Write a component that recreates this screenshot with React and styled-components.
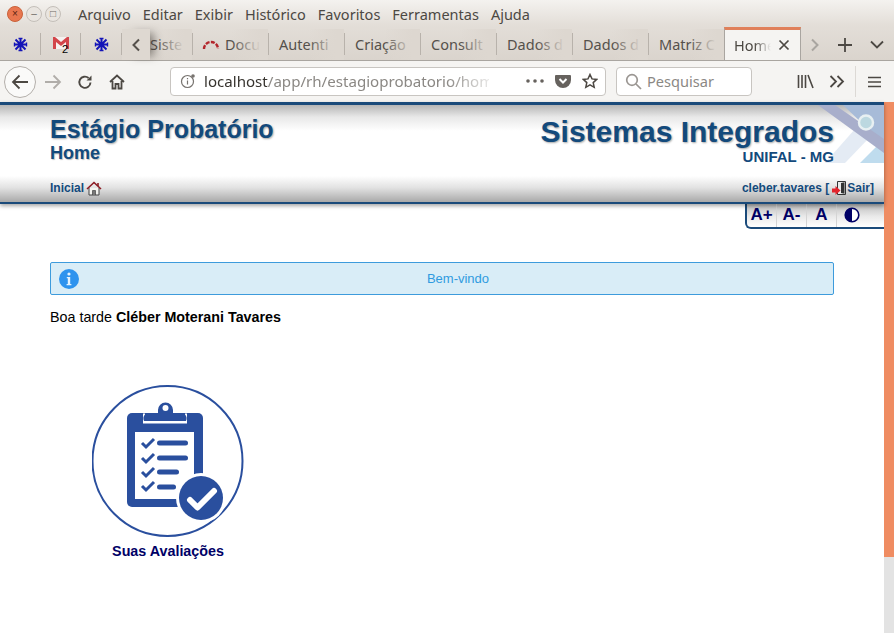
import React from 'react';
import styled, { createGlobalStyle } from 'styled-components';

const GlobalStyle = createGlobalStyle`
  html, body {
    margin: 0;
    padding: 0;
    height: 100%;
    overflow: hidden;
    background: #fff;
  }
  #root {
    height: 100%;
  }
`;

const Window = styled.div`
  width: 894px;
  height: 633px;
  display: flex;
  flex-direction: column;
  overflow: hidden;
  font-family: "Noto Sans", "Open Sans", sans-serif;
`;

const TitleArea = styled.div`
  height: 60px;
  background: linear-gradient(#f4f2ef 0, #e3ded8 25px, #dad4cd 60px);
  border-bottom: 1px solid #a9a5a0;
  display: flex;
  flex-direction: column;
`;

const MenuBar = styled.div`
  height: 29px;
  box-sizing: border-box;
  display: flex;
  align-items: center;
  padding: 0 0 2px 7px;
`;

const WinButtons = styled.div`
  display: flex;
  gap: 3px;
  margin-right: 17px;
`;

const WinButton = styled.div`
  width: 16px;
  height: 16px;
  box-sizing: border-box;
  border-radius: 50%;
  border: 1px solid ${(p) => (p.$close ? '#c9623a' : '#c4bfb9')};
  background: ${(p) => (p.$close ? '#e8764f' : '#e9e5e0')};
  color: ${(p) => (p.$close ? '#5b2413' : '#6e6a66')};
  font-size: 10px;
  line-height: 14px;
  text-align: center;
  font-family: "Liberation Sans", sans-serif;
`;

const MenuItem = styled.span`
  font-size: 14.5px;
  color: #4c4843;
  margin-right: 12px;
`;

const TabStrip = styled.div`
  height: 31px;
  display: flex;
  align-items: stretch;
  position: relative;
`;

const PinnedTab = styled.div`
  width: ${(p) => p.$w || 41}px;
  flex: none;
  display: flex;
  align-items: center;
  justify-content: center;
  position: relative;
  &::after {
    content: '';
    position: absolute;
    right: 0;
    top: 4px;
    bottom: 5px;
    width: 1px;
    background: #b8b2ab;
  }
`;

const ScrollArrow = styled.div`
  width: 28px;
  flex: none;
  display: flex;
  align-items: center;
  justify-content: center;
  position: relative;
  z-index: 1;
  box-shadow: 8px 0 8px -4px rgba(60, 55, 50, 0.55);
  background: #ded8d1;
`;

const Tab = styled.div`
  width: ${(p) => p.$w || 76}px;
  flex: none;
  box-sizing: border-box;
  display: flex;
  align-items: center;
  gap: 5px;
  padding-left: ${(p) => p.$pad ?? 10}px;
  padding-bottom: 1px;
  position: relative;
  overflow: hidden;
  font-size: 14.5px;
  color: #55504b;
  white-space: nowrap;
  &::before {
    content: '';
    position: absolute;
    right: 1px;
    top: 0;
    bottom: 0;
    width: 36px;
    background: linear-gradient(90deg, rgba(221, 215, 208, 0), #ddd7d0 80%);
  }
  &::after {
    content: '';
    position: absolute;
    right: 0;
    top: 4px;
    bottom: 5px;
    width: 1px;
    background: #b8b2ab;
  }
`;

const ActiveTab = styled.div`
  width: 77px;
  flex: none;
  box-sizing: border-box;
  height: 33px;
  margin: -2px 0 0 -1px;
  background: #f5f4f2;
  border: 1px solid #a9a5a0;
  border-bottom: 0;
  border-top: 3px solid #e0805a;
  display: flex;
  align-items: center;
  justify-content: space-between;
  padding: 0 10px 1px 9px;
  font-size: 14.5px;
  color: #4c4843;
  position: relative;
  z-index: 2;
  overflow: hidden;
`;

const FadeText = styled.span`
  width: 37px;
  overflow: hidden;
  white-space: nowrap;
  -webkit-mask-image: linear-gradient(90deg, #000 55%, transparent);
  mask-image: linear-gradient(90deg, #000 55%, transparent);
`;

const TabTools = styled.div`
  display: flex;
  align-items: center;
  flex: 1;
  padding-left: 9px;
  gap: 17px;
`;

const NavBar = styled.div`
  height: 41px;
  box-sizing: border-box;
  background: #f5f4f2;
  display: flex;
  align-items: center;
  padding-left: 4px;
`;

const BackButton = styled.div`
  width: 32px;
  height: 32px;
  box-sizing: border-box;
  border-radius: 50%;
  border: 1px solid #b3afaa;
  background: #fafaf9;
  display: flex;
  align-items: center;
  justify-content: center;
  margin-right: 7px;
`;

const NavIcon = styled.div`
  width: 20px;
  height: 20px;
  display: flex;
  align-items: center;
  justify-content: center;
  margin-right: ${(p) => p.$gap ?? 12}px;
  flex: none;
`;

const UrlBox = styled.div`
  width: ${(p) => p.$w}px;
  height: 29px;
  box-sizing: border-box;
  flex: none;
  background: #fff;
  border: 1px solid #c8c5c1;
  border-radius: 4px;
  display: flex;
  align-items: center;
  font-size: 14.6px;
  margin: 0 0 1px ${(p) => p.$ml || 0}px;
  padding-left: ${(p) => p.$pl || 0}px;
  color: #8b8884;
`;

const UrlText = styled.div`
  width: 285px;
  overflow: hidden;
  white-space: nowrap;
  color: #8b8884;
  font-size: 15.1px;
  margin-left: 8px;
  -webkit-mask-image: linear-gradient(90deg, #000 85%, rgba(0, 0, 0, 0.2));
  mask-image: linear-gradient(90deg, #000 85%, rgba(0, 0, 0, 0.2));
  b {
    font-weight: 400;
    color: #37342f;
  }
`;

const UrlActions = styled.div`
  display: flex;
  align-items: center;
  margin-left: 37px;
  gap: 11px;
`;

const SearchLabel = styled.span`
  margin-left: 5px;
`;

const NavRight = styled.div`
  display: flex;
  align-items: center;
  margin-left: 43px;
  height: 100%;
`;

const NavDivider = styled.div`
  width: 1px;
  height: 31px;
  background: #dcd9d5;
  margin: 0 12px 0 8px;
`;

const Page = styled.div`
  flex: 1;
  display: flex;
  min-height: 0;
`;

const PageBody = styled.div`
  flex: 1;
  min-width: 0;
  display: flex;
  flex-direction: column;
  font-family: "Liberation Sans", Arial, sans-serif;
  position: relative;
`;

const Scrollbar = styled.div`
  width: 10px;
  flex: none;
  background: #e3e3e3;
`;

const ScrollThumb = styled.div`
  height: 455px;
  background: #ef8c62;
`;

const Header = styled.header`
  border-top: 3px solid #1a4a7a;
  position: relative;
  z-index: 2;
  box-shadow: 0 2px 4px rgba(0, 0, 0, 0.35);
  border-bottom: 2px solid #1a4a7a;
`;

const Banner = styled.div`
  height: 71px;
  box-sizing: border-box;
  padding: 11px 50px 0;
  display: flex;
  justify-content: space-between;
  position: relative;
  overflow: hidden;
  background: linear-gradient(#b5b5b5 0, #e8e8e8 12px, #fff 26px);
`;

const Corner = styled.div`
  position: absolute;
  right: 0;
  top: 0;
  height: 58px;
`;

const Brand = styled.div`
  display: flex;
  flex-direction: column;
  color: #134a7c;
  font-weight: 700;
  position: relative;
`;

const AppTitle = styled.div`
  font-size: 25px;
  line-height: 27px;
  text-shadow: 1px 1px 2px rgba(0, 0, 0, 0.35);
`;

const AppSub = styled.div`
  font-size: 18px;
  line-height: 20px;
  text-shadow: 1px 1px 1px rgba(0, 0, 0, 0.25);
`;

const SystemBrand = styled(Brand)`
  align-items: flex-end;
`;

const SystemTitle = styled.div`
  font-size: 30px;
  line-height: 31px;
  text-shadow: 1px 1px 2px rgba(0, 0, 0, 0.35);
`;

const SystemSub = styled.div`
  font-size: 15px;
  line-height: 16px;
  margin-top: 2px;
`;

const Crumbs = styled.div`
  height: 26px;
  box-sizing: border-box;
  padding: 0 10px 2px 50px;
  display: flex;
  align-items: center;
  justify-content: space-between;
  background: linear-gradient(#fff, #e2e2e2 45%, #a9a9a9);
  font-size: 12px;
  font-weight: 700;
  color: #134a7c;
`;

const CrumbGroup = styled.div`
  display: flex;
  align-items: center;
  gap: ${(p) => p.$gap ?? 0}px;
`;

const ExitBox = styled.span`
  display: flex;
  margin: 0 1px 0 3px;
`;

const FontBar = styled.div`
  align-self: flex-end;
  width: 139px;
  height: 26px;
  box-sizing: border-box;
  margin-top: -1px;
  border-left: 2px solid #1a4a7a;
  border-bottom: 2px solid #1a4a7a;
  border-bottom-left-radius: 6px;
  display: flex;
  background: linear-gradient(#b9b9b9, #e9e9e9 55%, #fff);
`;

const FontButton = styled.div`
  width: 30px;
  box-sizing: border-box;
  display: flex;
  align-items: center;
  justify-content: center;
  font-size: 17px;
  font-weight: 700;
  color: #000066;
  border-right: 1px solid #d4d4d4;
  &:last-child {
    border-right: 0;
  }
`;

const Content = styled.main`
  padding: 33px 50px 0;
  display: flex;
  flex-direction: column;
`;

const Alert = styled.div`
  height: 33px;
  box-sizing: border-box;
  background: #d9edf7;
  border: 1px solid #3d9bdc;
  border-radius: 2px;
  display: flex;
  align-items: center;
  padding-left: 8px;
  font-size: 13px;
  color: #2f9be0;
`;

const AlertText = styled.div`
  flex: 1;
  text-align: center;
  padding-left: 4px;
`;

const Greeting = styled.p`
  margin: 14px 0 0;
  font-size: 14.3px;
  line-height: 16px;
  color: #000;
`;

const Tile = styled.div`
  width: 152px;
  margin: 60px 0 0 42px;
  display: flex;
  flex-direction: column;
  align-items: center;
`;

const TileLabel = styled.div`
  margin-top: 6px;
  font-size: 14.3px;
  line-height: 16px;
  font-weight: 700;
  color: #000066;
  white-space: nowrap;
`;

const Snow = () => (
  <svg width="15" height="15" viewBox="0 0 15 15" stroke="#1414b8" strokeWidth="2" fill="none">
    <path d="M2.500 2.500 12.500 12.500M12.500 2.500 2.500 12.500M7.500 1V14M1 7.500H14" />
    <path d="M5.500 1.500h4M5.500 13.500h4M1.500 5.500v4M13.500 5.500v4" strokeWidth="1.400" />
  </svg>
);

const Gmail = () => (
  <svg width="20" height="18" viewBox="0 0 20 18">
    <path d="M2 1h16v12H2z" fill="#f5f2f0" />
    <path d="M2 1v12h3V6l5 4 5-4v7h3V1h-2l-6 5-6-5z" fill="#d3454a" />
    <text x="11" y="17" fontSize="11" fontFamily="Liberation Sans" fill="#000">2</text>
  </svg>
);

const Chevron = ({ dir, color }) => (
  <svg width="10" height="14" viewBox="0 0 10 14" fill="none" stroke={color} strokeWidth="2">
    <path d={dir === 'left' ? 'M8 1.500 2.500 7 8 12.500' : 'M2 1.500 7.500 7 2 12.500'} />
  </svg>
);

const Arrow = ({ color, dir }) => (
  <svg width="18" height="16" viewBox="0 0 18 16" fill="none" stroke={color} strokeWidth="1.800">
    <path d={dir === 'right' ? 'M1 8H16M9.500 1.500 16 8l-6.500 6.500' : 'M17 8H2M8.500 1.500 2 8l6.500 6.500'} />
  </svg>
);

const Logo = () => (
  <svg width="67" height="58" viewBox="0 0 67 58">
    <path d="M38 24 52 33 28 58H8z" fill="#e4ebf4" />
    <path d="M43 58 67 34v24z" fill="#bfdcee" />
    <path d="M26 0h41v36L48 21z" fill="#a7bbd8" />
    <path d="M1 0h17l49 34v14z" fill="#a8aecb" />
    <circle cx="49" cy="17.500" r="7" fill="#bcd8e0" stroke="#e8f0f2" strokeWidth="2.500" />
  </svg>
);

const HomeGlyph = () => (
  <svg width="16" height="15" viewBox="0 0 16 15" fill="none">
    <path d="M3 7v7h10V7" fill="#f4f4f0" stroke="#444" />
    <path d="M1 8 8 1.500 15 8" stroke="#8c1c24" strokeWidth="1.600" />
    <path d="M6.500 14V9.500h3V14" fill="#777" stroke="#333" strokeWidth=".6" />
    <path d="M12 2v3" stroke="#8c1c24" strokeWidth="1.600" />
  </svg>
);

const ExitGlyph = () => (
  <svg width="14" height="14" viewBox="0 0 14 14">
    <path d="M5.500 .5h8v13h-8z" fill="#eaeaea" stroke="#333" />
    <path d="M9 2l3.500-.8v11.600L9 12z" fill="#333" />
    <path d="M0 7.500h3.500V5l5 4.500-5 4.500v-2.500H0z" fill="#e2242c" />
  </svg>
);

const InfoGlyph = () => (
  <svg width="20" height="20" viewBox="0 0 20 20">
    <circle cx="10" cy="10" r="10" fill="#2e93ee" />
    <circle cx="10" cy="5" r="1.600" fill="#e4f2fd" />
    <path d="M7.800 8h3.400v7h1.200v1.200H7.600V15h1.200V9.200h-1z" fill="#e4f2fd" />
  </svg>
);

const Contrast = () => (
  <svg width="16" height="16" viewBox="0 0 16 16">
    <circle cx="8" cy="8" r="6.800" fill="#fff" stroke="#000066" strokeWidth="1.600" />
    <path d="M8 1.200a6.800 6.800 0 0 0 0 13.600z" fill="#000066" />
  </svg>
);

const Check = ({ y }) => (
  <path d={`M50 ${y}l4 4 8-8`} fill="none" stroke="#2a4f9e" strokeWidth="3" />
);

const Clipboard = () => (
  <svg width="152" height="152" viewBox="0 0 152 152">
    <circle cx="75.500" cy="76" r="75" fill="#fff" stroke="#2a4f9e" strokeWidth="2" />
    <rect x="35" y="28" width="76" height="94" rx="5" fill="#2a4f9e" />
    <rect x="43" y="47" width="59" height="67" fill="#fff" />
    <path d="M54 36a6 6 0 0 1 6-6h6v-5a7.500 7.500 0 0 1 15 0v5h6a6 6 0 0 1 6 6v1H54z" fill="#2a4f9e" />
    <path d="M53 28.500h-2v10h44v-10h-2v1a6 6 0 0 1 1 6.500H52a6 6 0 0 1 1-6.500z" fill="#fff" />
    <circle cx="73.500" cy="23" r="3" fill="#fff" />
    <Check y={58} />
    <Check y={73} />
    <Check y={87} />
    <Check y={101} />
    <rect x="65" y="55.500" width="31" height="5" rx="2.500" fill="#2a4f9e" />
    <rect x="65" y="70.500" width="31" height="5" rx="2.500" fill="#2a4f9e" />
    <rect x="65" y="84.500" width="22" height="5" rx="2.500" fill="#2a4f9e" />
    <rect x="65" y="99.500" width="19" height="5" rx="2.500" fill="#2a4f9e" />
    <circle cx="109" cy="113" r="25" fill="#fff" />
    <circle cx="109" cy="113" r="22" fill="#2a4f9e" />
    <path d="M98 115l7.500 7.500L122 106" fill="none" stroke="#fff" strokeWidth="6" strokeLinecap="round" strokeLinejoin="round" />
  </svg>
);

const tabNames = ['Autenti', 'Criação', 'Consult', 'Dados d', 'Dados d', 'Matriz C'];

export default function App() {
  return (
    <Window>
      <GlobalStyle />
      <TitleArea>
        <MenuBar>
          <WinButtons>
            <WinButton $close>×</WinButton>
            <WinButton>–</WinButton>
            <WinButton>□</WinButton>
          </WinButtons>
          <MenuItem>Arquivo</MenuItem>
          <MenuItem>Editar</MenuItem>
          <MenuItem>Exibir</MenuItem>
          <MenuItem>Histórico</MenuItem>
          <MenuItem>Favoritos</MenuItem>
          <MenuItem>Ferramentas</MenuItem>
          <MenuItem>Ajuda</MenuItem>
        </MenuBar>
        <TabStrip>
          <PinnedTab><Snow /></PinnedTab>
          <PinnedTab $w={40}><Gmail /></PinnedTab>
          <PinnedTab><Snow /></PinnedTab>
          <ScrollArrow><Chevron dir="left" color="#55504b" /></ScrollArrow>
          <Tab $w={43} $pad={0}>Siste</Tab>
          <Tab $w={76} $pad={9}>
            <svg width="18" height="12" viewBox="0 0 18 12" fill="none" stroke="#b3262c" strokeWidth="2.400">
              <path d="M2 11a7 7 0 0 1 14 0" strokeDasharray="4 1.400" />
            </svg>
            Docu
          </Tab>
          {tabNames.map((name, i) => (
            <Tab key={i}>{name}</Tab>
          ))}
          <ActiveTab>
            <FadeText>Home</FadeText>
            <svg width="12" height="12" viewBox="0 0 12 12" stroke="#4c4843" strokeWidth="1.700">
              <path d="M1.500 1.500l9 9M10.500 1.500l-9 9" />
            </svg>
          </ActiveTab>
          <TabTools>
            <Chevron dir="right" color="#a9a5a0" />
            <svg width="16" height="16" viewBox="0 0 16 16" stroke="#4c4843" strokeWidth="1.800">
              <path d="M8 1v14M1 8h14" />
            </svg>
            <svg width="14" height="9" viewBox="0 0 14 9" fill="none" stroke="#4c4843" strokeWidth="1.800">
              <path d="M1 1.500l6 6 6-6" />
            </svg>
          </TabTools>
        </TabStrip>
      </TitleArea>
      <NavBar>
        <BackButton><Arrow color="#4c4843" /></BackButton>
        <NavIcon $gap={12}><Arrow color="#b0ada9" dir="right" /></NavIcon>
        <NavIcon $gap={12}>
          <svg width="16" height="16" viewBox="0 0 16 16" fill="none" stroke="#4c4843" strokeWidth="1.900">
            <path d="M13.500 8.500A5.600 5.600 0 1 1 11.600 4" />
            <path d="M14.500 1.500v5h-5z" fill="#4c4843" stroke="none" />
          </svg>
        </NavIcon>
        <NavIcon $gap={43}>
          <svg width="16" height="16" viewBox="0 0 16 16" fill="none" stroke="#4c4843" strokeWidth="1.800">
            <path d="M1 8 8 1.500 15 8M3.500 7v7.500h3V10h3v4.500h3V7" />
          </svg>
        </NavIcon>
        <UrlBox $w={436} $pl={9}>
          <svg width="16" height="16" viewBox="0 0 16 16" fill="none" stroke="#77736f" strokeWidth="1.200">
            <circle cx="7.500" cy="8.500" r="6" />
            <path d="M7.500 7.500v4M7.500 5v1.200" />
            <circle cx="13" cy="3" r="1.800" fill="#77736f" stroke="none" />
          </svg>
          <UrlText><b>localhost</b>/app/rh/estagioprobatorio/home</UrlText>
          <UrlActions>
            <svg width="18" height="4" viewBox="0 0 18 4" fill="#66625e">
              <circle cx="2" cy="2" r="1.800" />
              <circle cx="9" cy="2" r="1.800" />
              <circle cx="16" cy="2" r="1.800" />
            </svg>
            <svg width="16" height="16" viewBox="0 0 16 16">
              <path d="M1 2h14a1 1 0 0 1 1 1v4a8 8 0 0 1-16 0V3a1 1 0 0 1 1-1z" fill="#66625e" />
              <path d="M4.500 6 8 9.500 11.500 6" fill="none" stroke="#fff" strokeWidth="2" />
            </svg>
            <svg width="16" height="16" viewBox="0 0 16 16" fill="none" stroke="#4c4843" strokeWidth="1.500">
              <path d="M8 1.500l2 4.400 4.700.5-3.500 3.200 1 4.700L8 11.900 3.800 14.300l1-4.700L1.300 6.400 6 5.900z" />
            </svg>
          </UrlActions>
        </UrlBox>
        <UrlBox $w={136} $ml={10} $pl={8}>
          <svg width="17" height="17" viewBox="0 0 17 17" fill="none" stroke="#9a9692" strokeWidth="1.700">
            <circle cx="7" cy="7" r="5.300" />
            <path d="M11 11l5 5" />
          </svg>
          <SearchLabel>Pesquisar</SearchLabel>
        </UrlBox>
        <NavRight>
          <NavIcon $gap={12}>
            <svg width="17" height="15" viewBox="0 0 17 15" fill="none" stroke="#4c4843" strokeWidth="1.600">
              <path d="M1.500 1v13M5 1v13M8.500 1v13M11 1l5 13" />
            </svg>
          </NavIcon>
          <NavIcon $gap={0}>
            <svg width="16" height="13" viewBox="0 0 16 13" fill="none" stroke="#4c4843" strokeWidth="1.800">
              <path d="M1.500 1l5.500 5.500-5.500 5.500M8.500 1l5.500 5.500-5.500 5.500" />
            </svg>
          </NavIcon>
          <NavDivider />
          <svg width="13" height="12" viewBox="0 0 13 12" stroke="#4c4843" strokeWidth="1.700">
            <path d="M0 1.500h13M0 6h13M0 10.500h13" />
          </svg>
        </NavRight>
      </NavBar>
      <Page>
        <PageBody>
          <Header>
            <Banner>
              <Corner><Logo /></Corner>
              <Brand>
                <AppTitle>Estágio Probatório</AppTitle>
                <AppSub>Home</AppSub>
              </Brand>
              <SystemBrand>
                <SystemTitle>Sistemas Integrados</SystemTitle>
                <SystemSub>UNIFAL - MG</SystemSub>
              </SystemBrand>
            </Banner>
            <Crumbs>
              <CrumbGroup $gap={2}>Inicial <HomeGlyph /></CrumbGroup>
              <CrumbGroup>cleber.tavares [<ExitBox><ExitGlyph /></ExitBox>Sair]</CrumbGroup>
            </Crumbs>
          </Header>
          <FontBar>
            <FontButton>A+</FontButton>
            <FontButton>A-</FontButton>
            <FontButton>A</FontButton>
            <FontButton><Contrast /></FontButton>
          </FontBar>
          <Content>
            <Alert>
              <InfoGlyph />
              <AlertText>Bem-vindo</AlertText>
            </Alert>
            <Greeting>Boa tarde <b>Cléber Moterani Tavares</b></Greeting>
            <Tile>
              <Clipboard />
              <TileLabel>Suas Avaliações</TileLabel>
            </Tile>
          </Content>
        </PageBody>
        <Scrollbar><ScrollThumb /></Scrollbar>
      </Page>
    </Window>
  );
}
